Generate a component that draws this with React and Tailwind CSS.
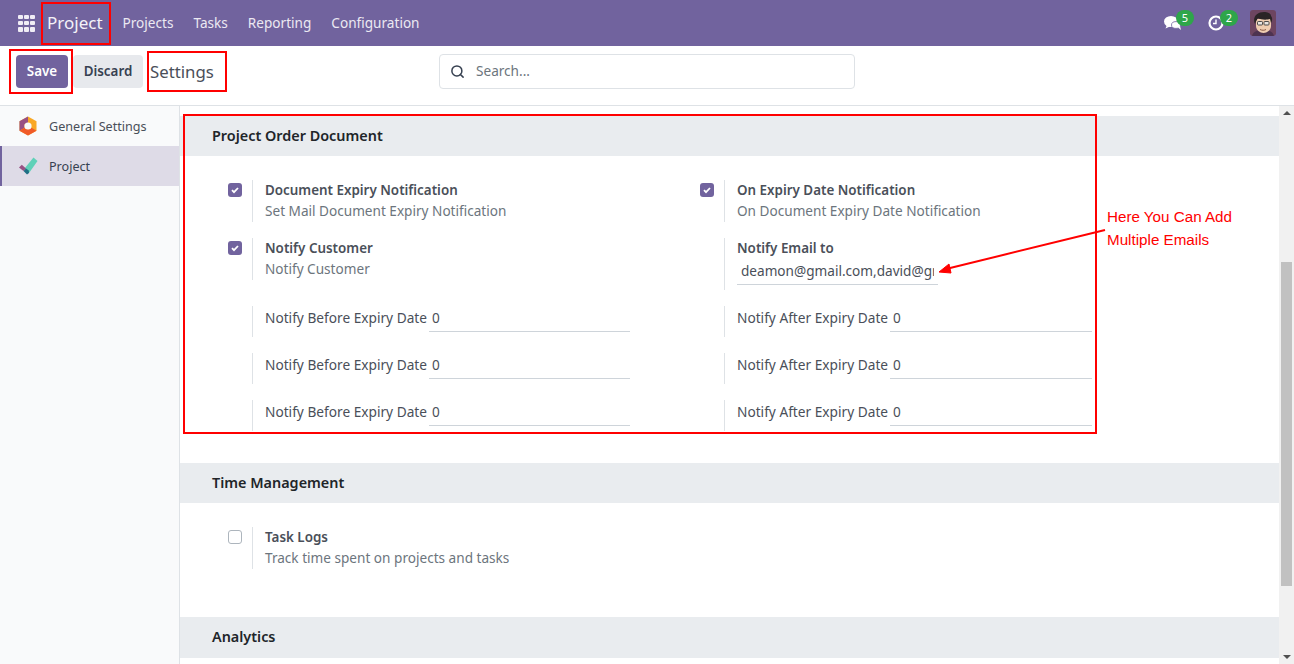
import React from 'react';
import { Search } from 'lucide-react';

function Check({ checked }) {
  return (
    <span className={`mt-[3px] flex h-[14px] w-[14px] items-center justify-center rounded-[3px] ${checked ? 'bg-[#71639e]' : 'border border-[#adb5bd] bg-white'}`}>
      {checked && (
        <svg viewBox="0 0 14 14" className="h-[14px] w-[14px]" fill="none" stroke="white" strokeWidth="1.8">
          <path d="M4 7.2l2 2 4-4.2" />
        </svg>
      )}
    </span>
  );
}

function Setting({ checked, title, desc, className = '' }) {
  return (
    <div className={`flex ${className}`}>
      <div className="w-[24px] shrink-0"><Check checked={checked} /></div>
      <div className="h-[42px] border-l border-[#dee2e6] pl-[12px] leading-[21px]">
        <div className="text-[13.4px] font-semibold text-[#4a4f59]">{title}</div>
        <div className="-mt-[1px] text-[13.6px] text-[#6c757d]">{desc}</div>
      </div>
    </div>
  );
}

function DateField({ label, width }) {
  return (
    <div className="flex pl-[24px]">
      <div className="flex h-[31px] items-start border-l border-[#dee2e6] pl-[12px] text-[#4a4f59]">
        <span className="whitespace-nowrap pt-[1px] text-[13.7px] leading-[21px]">{label}</span>
        <input readOnly value="0" className={`ml-[2px] h-[26px] border-b border-[#ced4da] pl-[3px] pb-[2px] leading-[21px] text-[#4a4f59] outline-none ${width}`} />
      </div>
    </div>
  );
}

function SectionHeader({ title, className = 'h-[40px]' }) {
  return (
    <div className={`flex items-center bg-[#e9ecef] pb-[1px] pl-[32px] text-[14.4px] font-semibold text-[#212529] ${className}`}>
      {title}
    </div>
  );
}

function RedBox({ className }) {
  return <div className={`pointer-events-none absolute border-2 border-[#ff0000] ${className}`} />;
}

function HexLogo() {
  return (
    <svg viewBox="0 0 20 20" className="h-[20px] w-[20px]">
      <path d="M10 0.5L18.5 5.2V14.8L10 19.5L1.5 14.8V5.2Z" fill="#f9a825" />
      <path d="M1.5 5.2L10 0.5V6.5L6.5 8.2V11.8L1.5 14.8Z" fill="#985184" />
      <path d="M1.5 14.8L6.5 11.8L10 13.5L13.5 11.8L18.5 14.8L10 19.5Z" fill="#f05a28" />
      <circle cx="10" cy="10" r="3.6" fill="#f9fafb" />
    </svg>
  );
}

function ProjectLogo() {
  return (
    <svg viewBox="0 0 20 20" className="h-[20px] w-[20px]">
      <path d="M6.5 12.500L15.500 1.500L19.5 5L11 17Z" fill="#5fd1b8" />
      <path d="M1 11.5L3.8 8.8L8 12.5L5.5 15Z" fill="#985184" />
      <path d="M5.5 15L8 12.5L10.8 14.5L11 17L9 18.5Z" fill="#1f6f85" />
    </svg>
  );
}

function ChatIcon() {
  return (
    <svg viewBox="0 0 18 16" className="h-[16px] w-[18px]" fill="white">
      <ellipse cx="7" cy="6.5" rx="7" ry="5.5" />
      <path d="M3 10l-1.5 3.5L7 11z" />
      <ellipse cx="12" cy="10" rx="4.5" ry="3.4" stroke="#71639e" strokeWidth="0.8" />
      <path d="M14 12.5l3 2.5-1-4z" />
    </svg>
  );
}

function Avatar() {
  return (
    <svg viewBox="0 0 26 26" className="h-[26px] w-[26px] rounded-[3px]">
      <rect width="26" height="26" fill="#6d4560" />
      <path d="M2 26c1-5 6-6 11-6s10 1 11 6z" fill="#4d3350" />
      <path d="M6 9h15v7c0 4-4 7-7.5 7S6 20 6 16z" fill="#f0cdb0" />
      <path d="M5 14C2 7 7 2 14 2c3 0 7 1 7 4 2 2 1 5 0 7l-1-4c-3 1-9 1-12-1-1 2-2 3-3 6z" fill="#2a2426" />
      <rect x="7.5" y="11.5" width="5" height="3.5" rx="0.8" fill="#e8e4df" stroke="#3a3a3a" strokeWidth="0.9" />
      <rect x="14" y="11.5" width="5" height="3.5" rx="0.8" fill="#e8e4df" stroke="#3a3a3a" strokeWidth="0.9" />
      <path d="M10 19.5c2 1 4.500 1 6 0" stroke="#8a5a44" fill="none" />
    </svg>
  );
}

function Badge({ n }) {
  return (
    <span className="absolute left-[12px] -top-[5px] flex h-[16px] w-[18px] items-center justify-center rounded-full bg-[#2ea64a] text-[11px] text-white">
      {n}
    </span>
  );
}

export default function App() {
  const menu = ['Projects', 'Tasks', 'Reporting', 'Configuration'];

  return (
    <div className="relative flex h-[664px] w-[1294px] flex-col overflow-hidden bg-white font-['Noto_Sans',sans-serif] text-[13.6px]">
      {/* Top bar */}
      <div className="flex h-[46px] shrink-0 items-center bg-[#71639e] text-white">
        <div className="ml-[18px] grid h-[17px] w-[17px] grid-cols-3 gap-[1.5px]">
          {[...Array(9)].map((_, i) => (
            <span key={i} className="rounded-[1px] bg-[#f0edf5]" />
          ))}
        </div>
        <span className="ml-[12px] text-[17px] text-[#f4f2f8]">Project</span>
        <div className="ml-[20px] flex gap-[20px] text-[#ece9f2]">
          {menu.map((m) => (
            <span key={m}>{m}</span>
          ))}
        </div>
        <div className="ml-auto flex items-center">
          <div className="relative mr-[26px] h-[16px] w-[18px]">
            <ChatIcon />
            <Badge n={5} />
          </div>
          <div className="relative mr-[26px] h-[16px] w-[16px]">
            <svg viewBox="0 0 16 16" className="h-[16px] w-[16px]" fill="none" stroke="white" strokeWidth="2.2">
              <circle cx="8" cy="8" r="6.5" />
              <path d="M8 4.500v4H5" strokeWidth="1.4" />
            </svg>
            <Badge n={2} />
          </div>
          <div className="mr-[18px]"><Avatar /></div>
        </div>
      </div>

      {/* Control panel */}
      <div className="relative flex h-[60px] shrink-0 items-start border-b border-[#dee2e6] pl-[16px] pt-[9px]">
        <button className="h-[33px] w-[52px] rounded-[4px] bg-[#71639e] text-[13.4px] font-semibold text-white">Save</button>
        <button className="ml-[5px] h-[33px] w-[70px] rounded-[4px] bg-[#e7e9ed] text-[13.4px] font-semibold text-[#374151]">Discard</button>
        <span className="ml-[7px] mt-[4px] text-[16.8px] text-[#4a4f59]">Settings</span>
        <div className="absolute left-[439px] top-[8px] flex h-[35px] w-[416px] items-center rounded-[4px] border border-[#dee2e6] pl-[10px] text-[#6c757d]">
          <Search className="h-[15px] w-[15px] text-[#374151]" strokeWidth={2.4} />
          <span className="ml-[11px] -mt-[1px]">Search...</span>
        </div>
      </div>

      <div className="flex min-h-0 flex-1">
        {/* Sidebar */}
        <div className="w-[180px] shrink-0 border-r border-[#dee2e6] bg-[#f9fafb] text-[12.6px]">
          <div className="flex h-[40px] items-center gap-[11px] pl-[18px] text-[#4a4f59]">
            <HexLogo />
            <span className="mt-[2px]">General Settings</span>
          </div>
          <div className="flex h-[40px] items-center gap-[11px] border-l-2 border-[#71639e] bg-[#dedbe7] pl-[16px] text-[#374151]">
            <ProjectLogo />
            <span className="mt-[2px]">Project</span>
          </div>
        </div>

        {/* Settings content */}
        <div className="min-w-0 flex-1 pt-[10px]">
          <SectionHeader title="Project Order Document" />
          <div className="grid h-[307px] grid-cols-[472px_1fr] content-start pl-[48px] pt-[24px]">
            <Setting checked title="Document Expiry Notification" desc="Set Mail Document Expiry Notification" />
            <Setting checked title="On Expiry Date Notification" desc="On Document Expiry Date Notification" />
            <Setting checked title="Notify Customer" desc="Notify Customer" className="mt-[16px]" />
            <div className="mt-[16px] flex pl-[24px]">
              <div className="h-[52px] border-l border-[#dee2e6] pl-[12px] leading-[21px]">
                <div className="text-[13.4px] font-semibold text-[#4a4f59]">Notify Email to</div>
                <input readOnly value="deamon@gmail.com,david@gmail.com" className="-mt-[1px] h-[27px] w-[201px] border-b border-[#ced4da] px-[4px] pb-[1px] text-[#4a4f59] outline-none" />
              </div>
            </div>
            <div className="mt-[16px]"><DateField label="Notify Before Expiry Date" width="w-[201px]" /></div>
            <div className="mt-[16px]"><DateField label="Notify After Expiry Date" width="w-[202px]" /></div>
            <div className="mt-[16px]"><DateField label="Notify Before Expiry Date" width="w-[201px]" /></div>
            <div className="mt-[16px]"><DateField label="Notify After Expiry Date" width="w-[202px]" /></div>
            <div className="mt-[16px]"><DateField label="Notify Before Expiry Date" width="w-[201px]" /></div>
            <div className="mt-[16px]"><DateField label="Notify After Expiry Date" width="w-[202px]" /></div>
          </div>
          <SectionHeader title="Time Management" />
          <div className="h-[114px] pl-[48px] pt-[24px]">
            <Setting title="Task Logs" desc="Track time spent on projects and tasks" />
          </div>
          <SectionHeader title="Analytics" className="h-[41px]" />
        </div>

        {/* Scrollbar */}
        <div className="flex w-[15px] shrink-0 flex-col items-center bg-[#f1f1f1]">
          <span className="mt-[5px] h-0 w-0 border-x-[4px] border-b-[4px] border-x-transparent border-b-[#505050]" />
          <div className="mt-[147px] h-[324px] w-full px-[2px]"><div className="h-full bg-[#c1c1c1]" /></div>
          <span className="mt-auto mb-[5px] h-0 w-0 border-x-[4px] border-t-[4px] border-x-transparent border-t-[#505050]" />
        </div>
      </div>

      {/* Annotations */}
      <RedBox className="left-[41px] top-[2px] h-[43px] w-[70px]" />
      <RedBox className="left-[9px] top-[49px] h-[45px] w-[64px]" />
      <RedBox className="left-[147px] top-[51px] h-[41px] w-[80px]" />
      <RedBox className="left-[183px] top-[114px] h-[320px] w-[914px]" />
      <div className="absolute left-[1107px] top-[205px] font-['Liberation_Sans',sans-serif] text-[15.2px] leading-[23px] text-[#ff0000]">
        Here You Can Add<br />Multiple Emails
      </div>
      <svg className="pointer-events-none absolute left-[930px] top-[220px] h-[60px] w-[180px]" viewBox="0 0 180 60" fill="none">
        <path d="M175 10L16 49" stroke="#ff0000" strokeWidth="2" />
        <path d="M9 52L19 44L21 53Z" fill="#ff0000" stroke="#ff0000" />
      </svg>
    </div>
  );
}
